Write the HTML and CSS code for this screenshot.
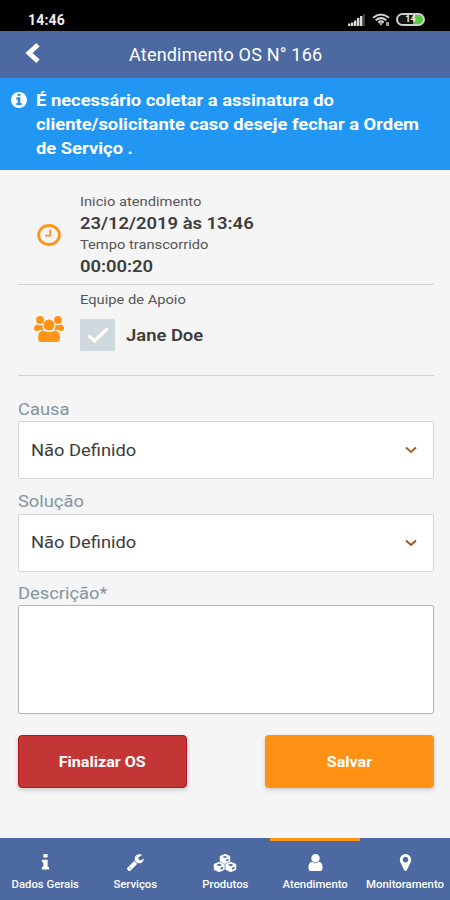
FILE: index.html
```html
<!DOCTYPE html>
<html lang="pt-BR">
<head>
<meta charset="utf-8">
<title>Atendimento OS</title>
<link rel="stylesheet" href="styles.css">
</head>
<body>
<div class="status">
  <span class="time">14:46</span>
  <svg class="signal" viewBox="0 0 17 12"><path d="M0 12v-2.500h2.400V12zM3 12V8.500h2.400V12zM6 12V6.500h2.400V12zM9 12V4h2.400V12zM12 12V2h2.400V12z" fill="#ddd"/><path d="M15 12V0h1.800v12z" fill="#444"/></svg>
  <svg class="wifi" viewBox="0 0 18 13"><g fill="none" stroke="#d4d4d4" stroke-width="2"><path d="M1 4.800Q9-1.800 17 4.800M3.700 7.300Q9 3 14.300 7.300M6.200 9.500Q9 7.300 11.800 9.500"/></g><path d="M7 10.200h4L9 12.500z" fill="#d4d4d4"/><path d="M14 9h3v4h-3z" fill="#999"/></svg>
  <span class="battery"><span>14</span></span>
</div>
<header class="topbar">
  <svg class="back" viewBox="0 0 15 20"><path d="M13 1.800L4 10l9 8.200" fill="none" stroke="#fff" stroke-width="4.800"/></svg>
  <h1>Atendimento OS N° 166</h1>
</header>
<div class="notice">
  <svg viewBox="128 128 1536 1536"><path fill="#fff" d="M1152 1376v-160q0-14-9-23t-23-9h-96v-512q0-14-9-23t-23-9h-320q-14 0-23 9t-9 23v160q0 14 9 23t23 9h96v320h-96q-14 0-23 9t-9 23v160q0 14 9 23t23 9h448q14 0 23-9t9-23zm-128-896v-160q0-14-9-23t-23-9h-192q-14 0-23 9t-9 23v160q0 14 9 23t23 9h192q14 0 23-9t9-23zm640 416q0 209-103 385.500t-279.500 279.500-385.500 103-385.500-103-279.500-279.500-103-385.500 103-385.500 279.500-279.500 385.500-103 385.500 103 279.500 279.500 103 385.500z"/></svg>
  <p>É necessário coletar a assinatura do<br>cliente/solicitante caso deseje fechar a Ordem<br>de Serviço .</p>
</div>
<main>
  <section class="row times">
    <svg class="clock" viewBox="0 0 24 22"><ellipse cx="12" cy="11" rx="10.400" ry="9.500" fill="none" stroke="#ff9416" stroke-width="2.800"/><path d="M13.200 5.500v6.200H8" fill="none" stroke="#ff9416" stroke-width="1.700"/></svg>
    <div>
      <p class="cap">Inicio atendimento</p>
      <p class="val">23/12/2019 às 13:46</p>
      <p class="cap">Tempo transcorrido</p>
      <p class="val">00:00:20</p>
    </div>
  </section>
  <section class="row team">
    <svg class="group" viewBox="0 0 30 26"><g fill="#ff9416"><circle cx="6" cy="4" r="3.900"/><circle cx="24" cy="4" r="3.900"/><path d="M3 8.500q3 1.500 5.500.3Q8 12 10 14H6.500Q5 14 4 15H2.500Q0 15 0 13 0 9 3 8.500zM27 8.500q-3 1.500-5.500.3Q22 12 20 14h3.500q1.500 0 2.500 1h1.500q2.500 0 2.500-2 0-4-3-4.500z"/><circle cx="15" cy="9" r="5.500"/><path d="M9.500 14.500q5.500 3.500 11 0 5.500 0 5.500 8 0 3.500-4 3.500H8q-4 0-4-3.500 0-8 5.500-8z"/></g></svg>
    <div>
      <p class="cap">Equipe de Apoio</p>
      <div class="member">
        <span class="check"><svg viewBox="0 0 22 16"><path d="M1.500 8.500l6 5.500L20.500 1.500" fill="none" stroke="#fff" stroke-width="3.200"/></svg></span>
        <span class="val">Jane Doe</span>
      </div>
    </div>
  </section>
  <div class="field causa">
    <label>Causa</label>
    <div class="select"><span>Não Definido</span><svg viewBox="0 0 12 8"><path d="M1 1.500l5 4.500 5-4.500" fill="none" stroke="#a0622f" stroke-width="2"/></svg></div>
  </div>
  <div class="field solucao">
    <label>Solução</label>
    <div class="select"><span>Não Definido</span><svg viewBox="0 0 12 8"><path d="M1 1.500l5 4.500 5-4.500" fill="none" stroke="#a85423" stroke-width="2"/></svg></div>
  </div>
  <div class="field descricao">
    <label>Descrição*</label>
    <div class="area"></div>
  </div>
  <div class="actions">
    <button class="finish"><span>Finalizar OS</span></button>
    <button class="save"><span>Salvar</span></button>
  </div>
</main>
<nav>
  <a><svg viewBox="128 128 1536 1536"><path d="M1216 1344v128q0 26-19 45t-45 19h-512q-26 0-45-19t-19-45v-128q0-26 19-45t45-19h64v-384h-64q-26 0-45-19t-19-45v-128q0-26 19-45t45-19h384q26 0 45 19t19 45v576h64q26 0 45 19t19 45zm-128-1152v192q0 26-19 45t-45 19h-256q-26 0-45-19t-19-45v-192q0-26 19-45t45-19h256q26 0 45 19t19 45z"/></svg><span>Dados Gerais</span></a>
  <a><svg viewBox="85 110 1660 1660"><path d="M448 1472q0-26-19-45t-45-19-45 19-19 45 19 45 45 19 45-19 19-45zm644-420l-682 682q-37 37-90 37-52 0-91-37l-106-108q-38-36-38-90 0-53 38-91l681-681q39 98 114.500 173.500t173.500 114.500zm634-435q0 39-23 106-47 134-164.500 217.500t-258.500 83.500q-185 0-316.500-131.500t-131.500-316.500 131.500-316.500 316.500-131.500q58 0 121.500 16.500t107.500 46.500q16 11 16 28t-16 28l-293 169v224l193 107q5-3 79-48.500t135.500-81 70.500-35.500q15 0 23.500 10t8.500 25z"/></svg><span>Serviços</span></a>
  <a><svg class="cubes" viewBox="0 0 24 18"><path d="M12 .3l4.800 2v5L12 9.500 7.200 7.300v-5zM6.200 8.200l5 2.100v5.300l-5 2.200-5-2.200v-5.300zM17.800 8.200l5 2.100v5.300l-5 2.200-5-2.200v-5.300z" stroke="#fff" stroke-width=".8" stroke-linejoin="round"/><path class="edge" d="M9.300 3l2.700 1.100L14.700 3 12 1.900zM13.200 7.600V5.800l2.400-1v1.700zM3.300 11l2.900 1.200L9.100 11 6.200 9.800zM7.500 15.800v-2l2.500-1v1.900zM14.900 11l2.900 1.200 2.900-1.200-2.900-1.200zM19.100 15.800v-2l2.500-1v1.900z"/></svg><span>Produtos</span></a>
  <a class="active"><svg viewBox="128 128 1536 1536"><path d="M1536 1399q0 109-62.500 187t-150.500 78h-854q-88 0-150.500-78t-62.500-187q0-85 8.500-160.500t31.500-152 58.500-131 94-89 134.500-34.500q131 128 313 128t313-128q76 0 134.500 34.500t94 89 58.500 131 31.500 152 8.500 160.500zm-256-887q0 159-112.500 271.500t-271.500 112.500-271.500-112.500-112.500-271.500 112.500-271.500 271.500-112.500 271.500 112.500 112.500 271.500z"/></svg><span>Atendimento</span></a>
  <a><svg viewBox="128 128 1536 1536"><path d="M1152 640q0-106-75-181t-181-75-181 75-75 181 75 181 181 75 181-75 75-181zm256 0q0 109-33 179l-364 774q-16 33-47.500 52t-67.500 19-67.500-19-46.500-52l-365-774q-33-70-33-179 0-212 150-362t362-150 362 150 150 362z"/></svg><span>Monitoramento</span></a>
</nav>
</body>
</html>
```
FILE: styles.css
```css
* { box-sizing: border-box; }
body {
  margin: 0;
  width: 450px;
  height: 900px;
  display: flex;
  flex-direction: column;
  overflow: hidden;
  background: #f5f5f5;
  font-family: Roboto, "Liberation Sans", sans-serif;
  color: #3c3c3c;
}
p, h1 { margin: 0; white-space: nowrap; }
svg { display: block; flex: none; }

.status {
  height: 31px;
  flex: none;
  display: flex;
  align-items: center;
  padding: 8px 25px 0 28px;
  background: #000;
  color: #eee;
}
.time { font-size: 14px; font-weight: 700; letter-spacing: .2px; flex: 1; }
.signal { width: 17px; height: 12px; margin-right: 7px; }
.wifi { width: 18px; height: 13px; margin-right: 6px; }
.battery {
  width: 29px;
  height: 13px;
  border: 2px solid #cfcfcf;
  border-radius: 7px;
  background: linear-gradient(90deg, #111 60%, #56c947 60%);
  font-size: 9px;
  font-weight: 700;
  line-height: 9px;
  text-align: center;
}

.topbar {
  height: 47px;
  flex: none;
  display: flex;
  align-items: center;
  padding-left: 25px;
  background: #4c69a1;
  color: #fff;
}
.back { width: 15px; height: 20px; margin: -4px 89px 0 0; }
h1 { font-size: 18px; font-weight: 400; letter-spacing: .2px; }

.notice {
  height: 92px;
  flex: none;
  display: flex;
  padding: 10px 0 0 11px;
  background: #2196f3;
  color: #fff;
  font-size: 17px;
  font-weight: 700;
  line-height: 24px;
}
.notice svg { width: 16px; height: 16px; margin: 4px 9px 0 0; }
.notice p { transform: scaleX(1.08); transform-origin: left; }

main { padding: 0 16px 0 18px; flex: 1; }
.row { display: flex; border-bottom: 1px solid #cfd3d4; }
.times { height: 115px; padding-top: 21px; }
.team { height: 91px; padding-top: 4px; }
.clock { width: 24px; height: 22px; margin: 33px 19px 0 19px; }
.group { width: 30px; height: 26px; margin: 27px 16px 0; }
.cap, .val { transform-origin: left; }
.cap { font-size: 13px; line-height: 22px; color: #555; transform: scaleX(1.13); }
.val { font-size: 16px; font-weight: 600; line-height: 21px; transform: scaleX(1.15); }
.member { display: flex; align-items: center; gap: 11px; margin-top: 8px; }
.check {
  width: 35px;
  height: 32px;
  display: grid;
  place-items: center;
  background: #cfd8dc;
  border-radius: 2px;
}
.check svg { width: 22px; height: 16px; }

.field { display: flex; flex-direction: column; }
.field label {
  align-self: flex-start;
  font-size: 16.5px;
  line-height: 20px;
  color: #84959e;
  transform: scaleX(1.11);
  transform-origin: left;
}
.causa label { height: 45px; padding-top: 24px; }
.solucao label { height: 35px; padding-top: 13px; }
.descricao label { height: 33px; padding-top: 12px; }
.select {
  height: 58px;
  display: flex;
  align-items: center;
  justify-content: space-between;
  padding: 0 16px 0 12px;
  background: #fff;
  border: 1px solid #d3d7d9;
  border-radius: 2px;
  font-size: 16.5px;
}
.select span { transform: scaleX(1.11); transform-origin: left; }
.solucao .select { padding-bottom: 1px; }
.select svg { width: 12px; height: 8px; }
.area {
  height: 109px;
  background: #fff;
  border: 1px solid #b2b5b6;
  border-radius: 2px;
}
.actions { display: flex; justify-content: space-between; margin-top: 21px; }
button {
  width: 169px;
  height: 53px;
  padding: 1px 0 0;
  border: 0;
  border-radius: 4px;
  color: #fff;
  font: 700 14.5px Roboto, "Liberation Sans", sans-serif;
  box-shadow: 0 2px 4px rgba(0, 0, 0, .18);
}
button span { display: inline-block; transform: scaleX(1.11); }
.finish { background: #c43635; border: 1px solid #b91319; }
.save { background: #ff9114; }

nav {
  height: 62px;
  flex: none;
  display: grid;
  grid-template-columns: repeat(5, 1fr);
  background: #4c69a1;
  color: #fff;
  font-size: 10.5px;
  font-weight: 500;
}
nav a {
  min-width: 0;
  display: flex;
  flex-direction: column;
  align-items: center;
  padding-top: 13px;
  border-top: 3px solid transparent;
  white-space: nowrap;
}
nav .active { border-color: #ff9416; }
nav svg { width: 17px; height: 17px; margin-bottom: 7px; fill: #fff; }
nav .cubes { width: 24px; height: 18px; margin-bottom: 6px; }
.cubes .edge { fill: #4c69a1; }
nav span { line-height: 13px; transform: scaleX(1.08); }
```
